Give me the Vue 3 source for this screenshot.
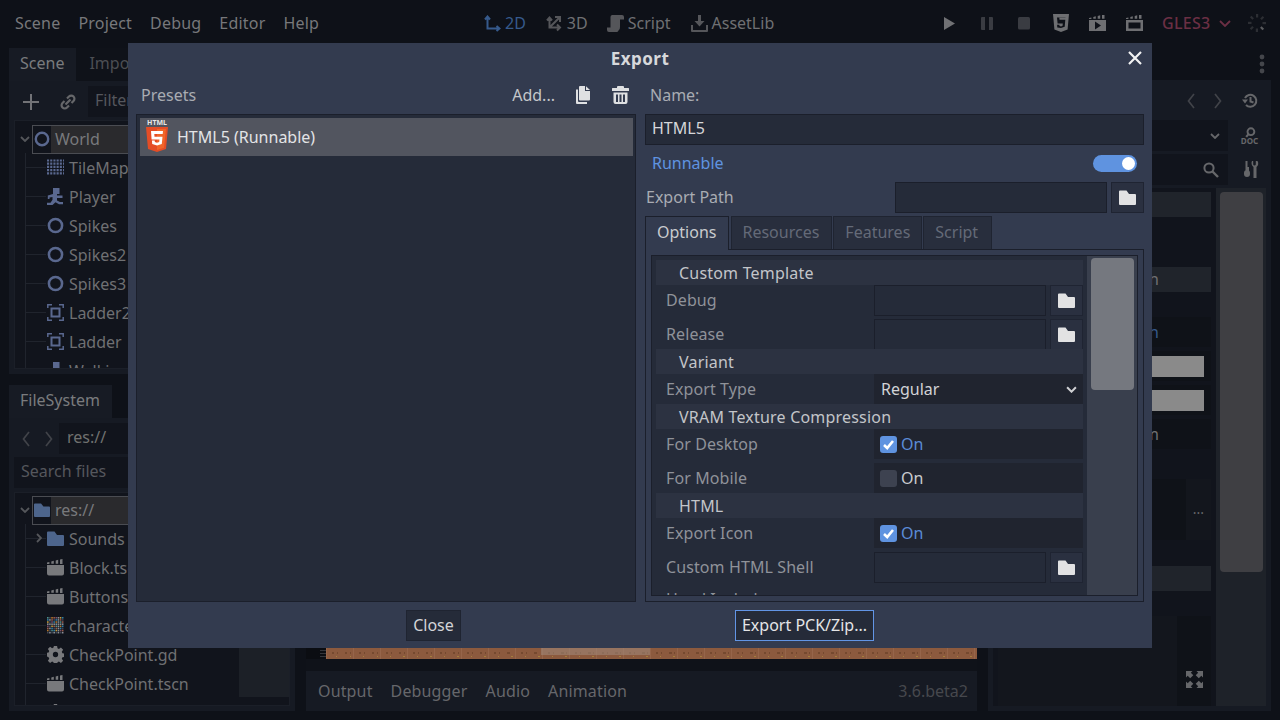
<script setup>
const menus = ['Scene', 'Project', 'Debug', 'Editor', 'Help']
const sceneRows = [
  { icon: 'i-grid', text: 'TileMap' },
  { icon: 'i-player', text: 'Player' },
  { icon: 'i-ring', text: 'Spikes' },
  { icon: 'i-ring', text: 'Spikes2' },
  { icon: 'i-ring', text: 'Spikes3' },
  { icon: 'i-collide', text: 'Ladder2' },
  { icon: 'i-collide', text: 'Ladder' },
  { icon: 'i-player', text: 'WalkingEnemy' }
]
const fileRows = [
  { icon: 'i-folder', text: 'Sounds', blue: true, arrow: true },
  { icon: 'i-clapper', text: 'Block.tscn' },
  { icon: 'i-clapper', text: 'Buttons.tscn' },
  { icon: 'thumb', text: 'character.png' },
  { icon: 'i-gear', text: 'CheckPoint.gd' },
  { icon: 'i-clapper', text: 'CheckPoint.tscn' },
  { icon: 'i-gear', text: 'Coin.gd' }
]
const palette = ['#4f8f8a', '#8a8f95', '#b5762a', '#2f7fa8', '#7a4f6a', '#3f4656', '#c49a3a', '#9a5a4a']
const thumb = []
for (let y = 0; y < 8; y++) {
  for (let x = 0; x < 8; x++) {
    thumb.push({ x: x * 2, y: y * 2, c: palette[(x * 5 + y * 3 + x * y) % 8] })
  }
}
const tabs = ['Resources', 'Features', 'Script']
const spinner = [0, 45, 90, 135, 180, 225, 270, 315]
</script>

<template>
  <div class="screen">
    <svg class="defs" width="0" height="0">
      <defs>
        <symbol id="i-folder" viewBox="0 0 17 15"><path fill="currentColor" d="M1 0.5h6.5l2.5 3.4h6a1 1 0 0 1 1 1v9a1 1 0 0 1-1 1H1a1 1 0 0 1-1-1V1.500a1 1 0 0 1 1-1z"/></symbol>
        <symbol id="i-dup" viewBox="0 0 16 18"><path fill="currentColor" d="M5 0h5v5h5v8.500a1 1 0 0 1-1 1H5a1 1 0 0 1-1-1V1a1 1 0 0 1 1-1zM11 0.300L15 4h-4zM1 3.500h2v11.500a1 1 0 0 0 1 1h8v2H2a1 1 0 0 1-1-1z"/></symbol>
        <symbol id="i-trash" viewBox="0 0 17 18"><path fill="currentColor" d="M6 0h5a1 1 0 0 1 1 1v1h4.500a.5.500 0 0 1 .5.500V5H0V2.500a.5.500 0 0 1 .5-.5H5V1a1 1 0 0 1 1-1zM1.500 6.500h14V16a2 2 0 0 1-2 2h-10a2 2 0 0 1-2-2zM4 8.500v7.500h2V8.500zM7.500 8.500v7.500h2V8.500zM11 8.500v7.500h2V8.500z" fill-rule="evenodd"/></symbol>
        <symbol id="i-ring" viewBox="0 0 16 16"><circle cx="8" cy="8" r="6.200" fill="none" stroke="currentColor" stroke-width="2.400"/></symbol>
        <symbol id="i-grid" viewBox="0 0 17 17"><path fill="none" stroke="currentColor" stroke-width="2.200" stroke-dasharray="2.100 1.100" d="M0 1.500h17M0 4.700h17M0 7.900h17M0 11.100h17M0 14.300h17"/></symbol>
        <symbol id="i-player" viewBox="0 0 17 17"><path fill="currentColor" d="M6 0h6.500v6H10v1.500h5.500V10H10v2.500l3 1.500h3v2.300h-4l-3.500-2-3 2.700H0v-2.300h3.500l2-3V9l-3 .5V11H.8V7.500L6 6z"/></symbol>
        <symbol id="i-collide" viewBox="0 0 17 17"><path fill="none" stroke="currentColor" stroke-width="1.500" d="M.8 4V.8H5M12 .8h4.200V4M16.200 13v3.200H12M5 16.200H.8V13"/><rect x="4.500" y="4.500" width="8" height="8" fill="none" stroke="currentColor" stroke-width="2"/></symbol>
        <symbol id="i-clapper" viewBox="0 0 17 16"><path fill="currentColor" d="M0 5.500h17V14a2 2 0 0 1-2 2H2a2 2 0 0 1-2-2zM0 3l2.400-.6v2H0zM4.300 1.900l2.500-.6v3H4.300zM8.700 .9l2.500-.6v4H8.700zM13 0l2.500-.5v4.900H13z"/></symbol>
        <symbol id="i-gear" viewBox="0 0 16 16"><path fill="currentColor" fill-rule="evenodd" d="M6.500 0h3l.4 2.200 1.300.6 1.900-1.300 2.100 2.100-1.300 1.900.6 1.300 2.200.4v3l-2.200.4-.6 1.300 1.300 1.900-2.100 2.100-1.900-1.300-1.300.6-.4 2.200h-3l-.4-2.200-1.300-.6-1.900 1.300-2.100-2.100 1.300-1.900-.6-1.300L-.7 9.500v-3l2.200-.4.6-1.300L.8 2.900l2.100-2.100 1.900 1.300 1.300-.6zM8 5.500a2.500 2.500 0 1 0 0 5 2.500 2.500 0 0 0 0-5z"/></symbol>
        <symbol id="i-2d" viewBox="0 0 17 17"><path fill="none" stroke="currentColor" stroke-width="2" d="M3.500 2v11.500H15M1 4.500L3.500 1.500 6 4.500M12.500 11l3 2.500-3 2.500"/></symbol>
        <symbol id="i-3d" viewBox="0 0 17 17"><path fill="none" stroke="currentColor" stroke-width="2" d="M3.500 3v9.500h10M3.500 12.500L13 3M1 5.500l2.500-3 2.500 3M11 15.500l3-3-3-3M9 2h5v5"/></symbol>
        <symbol id="i-script" viewBox="0 0 17 17"><path fill="currentColor" d="M5 0h10a2 2 0 0 1 2 2v2.500h-4V12a4 4 0 0 1-1.500 3.500A2 2 0 0 1 10 17H2a2 2 0 0 1-2-2v-2.500h3.500V2A2 2 0 0 1 5 0z"/></symbol>
        <symbol id="i-asset" viewBox="0 0 17 17"><path fill="currentColor" d="M7 0h3v6h3.500L8.500 11.500 3.500 6H7zM0 10h2v5h13v-5h2v6a1 1 0 0 1-1 1H1a1 1 0 0 1-1-1z"/></symbol>
        <symbol id="i-html" viewBox="0 0 16 18"><path fill="currentColor" fill-rule="evenodd" d="M0 0h16l-1.400 15.500L8 18l-6.600-2.500zM4 3.500l.6 6H9.800l-.2 2.300-1.600.6-1.600-.6-.1-1.100H4.100l.2 2.800L8 14l3.700-1.300.6-6.900H6.500l-.2-2H12.400l.2-.3z"/></symbol>
        <symbol id="i-film-play" viewBox="0 0 17 16"><path fill="currentColor" fill-rule="evenodd" d="M0 5h17v11H0zM6 6.500v8l6-4zM0 3l2.400-.6v1.500H0zM4.300 1.900l2.500-.6v2.500H4.300zM8.700 .9l2.500-.6v3.500H8.700zM13 0l2.500-.5v4.300H13z"/></symbol>
        <symbol id="i-film-box" viewBox="0 0 17 16"><path fill="currentColor" fill-rule="evenodd" d="M0 5h17v11H0zM2.500 7.500v6h12v-6zM0 3l2.400-.6v1.500H0zM4.300 1.900l2.500-.6v2.500H4.300zM8.700 .9l2.500-.6v3.500H8.700zM13 0l2.500-.5v4.300H13z"/></symbol>
        <symbol id="i-search" viewBox="0 0 16 16"><circle cx="6" cy="6" r="4.600" fill="none" stroke="currentColor" stroke-width="2"/><path stroke="currentColor" stroke-width="2.400" d="M9.500 9.500L15 15"/></symbol>
        <symbol id="i-tools" viewBox="0 0 16 17"><path fill="currentColor" d="M2.500 0h2v6h1.500v3.500c1 1 1 2 1 3.500a3 3 0 0 1-6 0c0-1.500 0-2.500 1-3.500H2.500V6h0zM9 0l1.200 0v3.500a1.400 1.400 0 0 0 2.600 0V0H14.500c1.200 2 1 4.500-1 6v11h-3V6C8.500 4.500 8 2 9 0z"/></symbol>
        <symbol id="i-history" viewBox="0 0 16 16"><path fill="none" stroke="currentColor" stroke-width="2" d="M3 5a6 6 0 1 1 1 7M8.500 4v4.500l3 1"/><path fill="currentColor" d="M0 6.500h6L3 10.500z"/></symbol>
      </defs>
    </svg>

    <header class="topbar">
      <nav class="menus">
        <span v-for="m in menus" :key="m">{{ m }}</span>
      </nav>
      <nav class="views">
        <span class="view active"><svg class="ic17"><use href="#i-2d" /></svg>2D</span>
        <span class="view"><svg class="ic17"><use href="#i-3d" /></svg>3D</span>
        <span class="view"><svg class="ic17"><use href="#i-script" /></svg>Script</span>
        <span class="view"><svg class="ic17"><use href="#i-asset" /></svg>AssetLib</span>
      </nav>
      <div class="runbar">
        <svg class="run-btn play" viewBox="0 0 12 13"><path fill="currentColor" d="M1 0l11 6.500L1 13z" /></svg>
        <svg class="run-btn dim" viewBox="0 0 12 13"><path fill="currentColor" d="M0 1a1 1 0 0 1 1-1h3v13H1a1 1 0 0 1-1-1zM8 0h3a1 1 0 0 1 1 1v11a1 1 0 0 1-1 1H8z" /></svg>
        <svg class="run-btn dim stop" viewBox="0 0 12 13"><rect width="12" height="12.500" rx="1.500" fill="currentColor" /></svg>
        <svg class="html-btn"><use href="#i-html" /></svg>
        <svg class="film-btn"><use href="#i-film-play" /></svg>
        <svg class="film-btn last"><use href="#i-film-box" /></svg>
        <span class="gles">GLES3</span>
        <svg class="gles-arrow" viewBox="0 0 12 7"><path d="M1 1l5 5 5-5" fill="none" stroke="currentColor" stroke-width="1.800" /></svg>
        <svg class="spinner" viewBox="0 0 18 18">
          <rect v-for="(a, i) in spinner" :key="a" x="8" y="0" width="2.200" height="3.500" :fill="i === 3 ? '#5a5b5e' : '#2c2e33'" :transform="`rotate(${a} 9 9)`" />
        </svg>
      </div>
    </header>

    <main class="workspace">
      <section class="left-col">
        <div class="dock scene-dock">
          <div class="tabbar">
            <span class="dtab on">Scene</span>
            <span class="dtab">Import</span>
          </div>
          <div class="dock-panel">
            <div class="tool-row">
              <svg class="plus" viewBox="0 0 16 16"><path d="M8 0v16M0 8h16" stroke="currentColor" stroke-width="2" /></svg>
              <svg class="link" viewBox="0 0 16 16"><path d="M7 4.500l2-2a3 3 0 0 1 4.500 4.500l-2 2M9 11.500l-2 2A3 3 0 0 1 2.500 9l2-2M5.500 10.500l5-5" fill="none" stroke="currentColor" stroke-width="2.200" /></svg>
              <span class="field filter">Filter nodes</span>
            </div>
            <div class="tree">
              <div class="tree-rows">
                <div class="root-row">
                  <svg class="chev" viewBox="0 0 10 6"><path d="M1 1l4 4 4-4" fill="none" stroke="currentColor" stroke-width="1.800" /></svg>
                  <div class="root-sel">
                    <span class="root-ic"><svg class="ic16 node"><use href="#i-ring" /></svg></span>
                    <span>World</span>
                  </div>
                </div>
                <div v-for="r in sceneRows" :key="r.text" class="row">
                  <span class="tick"></span>
                  <svg class="ic17 node"><use :href="'#' + r.icon" /></svg>
                  <span>{{ r.text }}</span>
                </div>
              </div>
            </div>
          </div>
        </div>

        <div class="dock file-dock">
          <div class="tabbar">
            <span class="dtab on">FileSystem</span>
          </div>
          <div class="dock-panel fs-panel">
            <div class="path-row">
              <svg class="nav" viewBox="0 0 8 16"><path d="M7 1L1.500 8 7 15" fill="none" stroke="currentColor" stroke-width="1.700" /></svg>
              <svg class="nav" viewBox="0 0 8 16"><path d="M1 1l5.500 7L1 15" fill="none" stroke="currentColor" stroke-width="1.700" /></svg>
              <span class="field path">res://</span>
            </div>
            <div class="search-row"><span class="field search">Search files</span></div>
            <div class="tree fs-tree">
              <div class="tree-rows">
                <div class="root-row">
                  <svg class="chev" viewBox="0 0 10 6"><path d="M1 1l4 4 4-4" fill="none" stroke="currentColor" stroke-width="1.800" /></svg>
                  <div class="root-sel">
                    <span class="root-ic"><svg class="ic16 folder-blue"><use href="#i-folder" /></svg></span>
                    <span>res://</span>
                  </div>
                </div>
                <div v-for="r in fileRows" :key="r.text" class="row">
                  <span class="tick"></span>
                  <svg v-if="r.arrow" class="row-arrow" viewBox="0 0 6 10"><path d="M1 1l4 4-4 4" fill="none" stroke="currentColor" stroke-width="1.800" /></svg>
                  <svg v-if="r.icon === 'thumb'" class="ic17" viewBox="0 0 16 16">
                    <rect v-for="(t, i) in thumb" :key="i" :x="t.x" :y="t.y" width="1.500" height="1.500" :fill="t.c" />
                  </svg>
                  <svg v-else class="ic17" :class="r.blue ? 'folder-blue' : 'file-ic'"><use :href="'#' + r.icon" /></svg>
                  <span>{{ r.text }}</span>
                </div>
              </div>
              <div class="fs-scroll"></div>
            </div>
          </div>
        </div>
      </section>

      <section class="center-col">
        <div class="viewport">
          <div class="strip">
            <div class="ruler"></div>
            <div class="ground"><div class="ghost"></div></div>
          </div>
        </div>
        <div class="bottom-bar">
          <span>Output</span>
          <span>Debugger</span>
          <span>Audio</span>
          <span>Animation</span>
          <span class="version">3.6.beta2</span>
        </div>
      </section>

      <section class="right-col">
        <div class="right-tabs">
          <svg class="dots" viewBox="0 0 6 20"><circle cx="3" cy="3" r="2.400" /><circle cx="3" cy="10" r="2.400" /><circle cx="3" cy="17" r="2.400" /></svg>
        </div>
        <div class="right-panel">
          <div class="nav-row">
            <svg class="rnav" viewBox="0 0 8 16"><path d="M7 1L1.500 8 7 15" fill="none" stroke="currentColor" stroke-width="1.700" /></svg>
            <svg class="rnav" viewBox="0 0 8 16"><path d="M1 1l5.500 7L1 15" fill="none" stroke="currentColor" stroke-width="1.700" /></svg>
            <svg class="ric"><use href="#i-history" /></svg>
          </div>
          <div class="res-row">
            <div class="res-field">
              <svg class="res-chev" viewBox="0 0 10 6"><path d="M1 1l4 4 4-4" fill="none" stroke="currentColor" stroke-width="1.800" /></svg>
            </div>
            <svg class="doc" viewBox="0 0 20 18">
              <circle cx="11.500" cy="4.500" r="3.600" fill="none" stroke="currentColor" stroke-width="2" />
              <path d="M9 7L6.500 10" stroke="currentColor" stroke-width="2.200" />
              <text x="10" y="17.800" text-anchor="middle" class="doc-text">DOC</text>
            </svg>
          </div>
          <div class="res-row second">
            <div class="res-field">
              <svg class="res-search"><use href="#i-search" /></svg>
            </div>
            <svg class="ric tool"><use href="#i-tools" /></svg>
          </div>
          <div class="insp">
            <div class="insp-rows">
              <div class="band"></div>
              <div class="irow h50"></div>
              <div class="band"><span class="end">Collision</span></div>
              <div class="irow h25"></div>
              <div class="vrow"><span class="end blue">On</span></div>
              <div class="vrow gap"><i class="bar"></i></div>
              <div class="vrow gap"><i class="bar"></i></div>
              <div class="vrow gap"><span class="end">Transform</span></div>
              <div class="irow h30"></div>
              <div class="block">
                <div class="block-btn">...</div>
              </div>
              <div class="irow h26"></div>
              <div class="band"></div>
              <div class="irow h25"></div>
              <div class="preview">
                <div class="preview-btn">
                  <svg class="expand" viewBox="0 0 17 17"><path fill="currentColor" d="M0 0h6.500L4.800 1.700 7.300 4.200 4.200 7.300 1.700 4.800 0 6.500zM17 0v6.500L15.300 4.800 12.800 7.300 9.700 4.200 12.200 1.700 10.500 0zM0 17v-6.500l1.700 1.700 2.500-2.500 3.100 3.100-2.500 2.500 1.700 1.700zM17 17h-6.500l1.700-1.700-2.500-2.500 3.100-3.100 2.500 2.500 1.700-1.700z" /></svg>
                </div>
              </div>
            </div>
            <div class="insp-scroll"><div class="insp-grab"></div></div>
          </div>
        </div>
      </section>
    </main>

    <div class="dialog">
      <div class="title">
        <strong>Export</strong>
        <svg class="close" viewBox="0 0 14 14"><path d="M1 1l12 12M13 1L1 13" stroke="currentColor" stroke-width="2.200" /></svg>
      </div>
      <div class="dlg-body">
        <div class="presets">
          <div class="presets-head">
            <span class="muted">Presets</span>
            <span class="add">Add...</span>
            <svg class="head-ic dup"><use href="#i-dup" /></svg>
            <svg class="head-ic trash"><use href="#i-trash" /></svg>
          </div>
          <div class="preset-list">
            <div class="preset-row">
              <svg class="logo" viewBox="0 0 24 34">
                <text x="12" y="6" text-anchor="middle" class="logo-text">HTML</text>
                <path fill="#e44d26" d="M1 8h22l-2 22-9 3-9-3z" />
                <path fill="#f16529" d="M12 10v21l7-2.300L21 10z" />
                <path fill="#fff" d="M6 12h12l-.3 3H9.300l.2 2.800h8l-.7 7.200-4.800 1.500-4.800-1.500-.3-3.500h2.800l.2 1.600 2.100.6 2.200-.6.3-2.600H6.600z" />
              </svg>
              <span>HTML5 (Runnable)</span>
            </div>
          </div>
        </div>
        <div class="config">
          <div class="name-head"><span class="muted">Name:</span></div>
          <div class="input name-input">HTML5</div>
          <div class="runnable">
            <span class="blue-text">Runnable</span>
            <span class="toggle"><i></i></span>
          </div>
          <div class="export-path">
            <span class="muted">Export Path</span>
            <div class="path-field">
              <div class="input grow"></div>
              <button class="folder-btn"><svg class="folder"><use href="#i-folder" /></svg></button>
            </div>
          </div>
          <div class="tabs">
            <span class="tab active">Options</span>
            <span v-for="t in tabs" :key="t" class="tab">{{ t }}</span>
          </div>
          <div class="tab-panel">
            <div class="options">
              <div class="opt-list">
                <div class="section">Custom Template</div>
                <div class="opt lift">
                  <label>Debug</label>
                  <div class="path-field val"><div class="input grow"></div><button class="folder-btn"><svg class="folder"><use href="#i-folder" /></svg></button></div>
                </div>
                <div class="opt sp clipped">
                  <label>Release</label>
                  <div class="path-field val"><div class="input grow"></div><button class="folder-btn"><svg class="folder"><use href="#i-folder" /></svg></button></div>
                </div>
                <div class="section">Variant</div>
                <div class="opt h30">
                  <label>Export Type</label>
                  <div class="select val"><span>Regular</span><svg class="sel-chev" viewBox="0 0 10 6"><path d="M1 1l4 4 4-4" fill="none" stroke="currentColor" stroke-width="1.800" /></svg></div>
                </div>
                <div class="section">VRAM Texture Compression</div>
                <div class="opt h30">
                  <label>For Desktop</label>
                  <div class="check val on"><span class="box"><svg viewBox="0 0 17 17"><path d="M4 9l3.200 3L13 5" fill="none" stroke="#fff" stroke-width="2.600" /></svg></span>On</div>
                </div>
                <div class="opt h30 sp4">
                  <label>For Mobile</label>
                  <div class="check val"><span class="box"></span>On</div>
                </div>
                <div class="section">HTML</div>
                <div class="opt h30">
                  <label>Export Icon</label>
                  <div class="check val on"><span class="box"><svg viewBox="0 0 17 17"><path d="M4 9l3.200 3L13 5" fill="none" stroke="#fff" stroke-width="2.600" /></svg></span>On</div>
                </div>
                <div class="opt sp4 lift">
                  <label>Custom HTML Shell</label>
                  <div class="path-field val"><div class="input grow"></div><button class="folder-btn"><svg class="folder"><use href="#i-folder" /></svg></button></div>
                </div>
                <div class="opt sp4 head-inc"><label>Head Include</label></div>
              </div>
              <div class="opt-scroll"><div class="opt-grab"></div></div>
            </div>
          </div>
        </div>
      </div>
      <div class="dlg-foot">
        <button class="btn close-btn">Close</button>
        <button class="btn export-btn">Export PCK/Zip...</button>
      </div>
    </div>
  </div>
</template>

<style scoped>
.screen {
  position: relative;
  width: 1280px;
  height: 720px;
  overflow: hidden;
  background: #0e1118;
  color: #77787b;
  font: 16px/22px "Noto Sans", sans-serif;
  white-space: nowrap;
}
.screen *, .screen *::before { box-sizing: border-box; }
.defs { position: absolute; }
svg { display: block; flex: none; }
.ic16 { width: 16px; height: 16px; }
.ic17 { width: 17px; height: 17px; }

/* top bar */
.topbar {
  display: flex;
  align-items: center;
  height: 46px;
  padding-left: 15px;
  color: #77787b;
}
.menus { display: flex; gap: 18px; width: 469px; letter-spacing: .2px; }
.views { display: flex; width: 459px; }
.view { display: flex; align-items: center; gap: 4px; margin-right: 20px; color: #6f7073; }
.view svg { color: #55565a; }
.view:nth-child(2) { margin-right: 19px; }
.view.active { color: #365a8c; }
.view.active svg { color: #365a8c; }
.runbar { display: flex; align-items: center; }
.run-btn { width: 12px; height: 13px; margin-right: 25px; }
.run-btn.stop { margin-right: 23px; }
.run-btn.play { color: #707174; margin-right: 26px; }
.run-btn.dim { color: #3a3c42; }
.html-btn { width: 16px; height: 18px; margin-right: 20px; color: #6e6f72; }
.film-btn { width: 17px; height: 16px; margin-right: 20px; color: #6e6f72; }
.film-btn.last { margin-right: 19px; }
.gles { color: #6b2f44; font-weight: 500; letter-spacing: .3px; }
.gles-arrow { width: 12px; height: 7px; margin-left: 8px; color: #6b2f44; }
.spinner { width: 18px; height: 18px; margin-left: 17px; }

/* workspace */
.workspace {
  display: flex;
  gap: 11px;
  height: 667px;
  padding: 2px 9px 0;
}
.left-col { width: 286px; display: flex; flex-direction: column; gap: 11px; flex: none; }
.dock { display: flex; flex-direction: column; }
.scene-dock { height: 326px; }
.file-dock { height: 326px; }
.tabbar { display: flex; height: 33px; flex: none; }
.dtab { padding: 4px 12px 0 11px; color: #4c4e53; background: #0f1219; }
.dtab + .dtab { padding-left: 13px; }
.dtab.on { background: #171b24; color: #7a7b7e; }
.dock-panel { flex: 1; min-height: 0; background: #161a23; padding: 5px; display: flex; flex-direction: column; }
.tool-row { display: flex; align-items: center; height: 31px; margin-bottom: 3px; flex: none; }
.plus { width: 16px; height: 16px; margin-left: 9px; color: #727377; }
.link { width: 16px; height: 16px; margin-left: 21px; color: #66676a; }
.field { background: #11141c; color: #55575d; display: block; height: 31px; line-height: 28px; }
.filter { margin-left: 12px; width: 190px; padding-left: 7px; }
.tree {
  flex: 1;
  min-height: 0;
  background: #11141c;
  border: 1px solid #1b1f28;
  padding-top: 4px;
  display: flex;
  overflow: hidden;
}
.tree-rows { flex: 1; min-width: 0; display: flex; flex-direction: column; position: relative; color: #6f7073; overflow: hidden; }
.tree-rows::before {
  content: "";
  position: absolute;
  left: 10px;
  top: 28px;
  bottom: 0;
  width: 1px;
  background: #20242d;
}
.root-row { display: flex; align-items: center; height: 28px; flex: none; }
.chev { width: 10px; height: 6px; margin-left: 5px; margin-right: 2px; color: #55575b; }
.root-sel {
  flex: 1;
  height: 29px;
  display: flex;
  align-items: center;
  border: 1px solid #4a4c52;
  background: #2a2a2d;
  color: #78797c;
}
.root-ic { width: 18px; height: 100%; background: #11141c; display: flex; align-items: center; justify-content: center; margin-right: 4px; }
.row { display: flex; align-items: center; height: 29px; flex: none; position: relative; padding-left: 32px; gap: 5px; }
.tick { position: absolute; left: 11px; top: 14px; width: 20px; height: 1px; background: #20242d; }
.node { color: #5a688f; }
.folder-blue { color: #4d658c; }
.file-ic { color: #78797c; }
.row-arrow { position: absolute; left: 21px; top: 9px; width: 6px; height: 10px; color: #55575b; }
.path-row { display: flex; align-items: center; height: 31px; flex: none; }
.nav { width: 8px; height: 16px; color: #414349; margin-left: 8px; margin-right: 7px; }
.nav + .nav { margin-left: 8px; margin-right: 6px; }
.path { flex: 1; padding-left: 8px; color: #70716f; }
.search-row { height: 31px; margin-top: 3px; flex: none; }
.search { margin-left: 0; padding-left: 7px; width: 160px; }
.fs-tree { margin-top: 4px; padding-top: 3px; }
.fs-scroll { width: 50px; margin-bottom: 8px; background: #1c2027; flex: none; }

/* center */
.center-col { width: 671px; display: flex; flex-direction: column; flex: none; }
.viewport { height: 623px; padding-top: 600px; flex: none; background: #0f1219; }
.strip { display: flex; height: 11px; background: #0b0d12; }
.ruler {
  width: 20px;
  background: repeating-linear-gradient(to bottom, transparent 0 2px, #34363b 2px 3px) 14px 0 / 6px 100% no-repeat;
}
.ground {
  flex: 1;
  position: relative;
  background:
    repeating-linear-gradient(to right, #75492f 0 2px, transparent 2px 5px, #75492f 5px 6px, transparent 6px 13.500px) 6px 4px / 100% 2px no-repeat,
    repeating-linear-gradient(to right, #a67f3c 0 1px, transparent 1px 13.500px) 10px 8px / 100% 1px no-repeat,
    repeating-linear-gradient(to right, #96654a 0 1px, transparent 1px 27px),
    #8c5a3e;
}
.ghost { position: absolute; left: 215px; top: 0; width: 109px; height: 7px; background: #a08b7c; opacity: .55; }
.bottom-bar {
  display: flex;
  align-items: center;
  gap: 18px;
  height: 40px;
  flex: none;
  padding: 0 9px 0 12px;
  background: #161a23;
  color: #66676b;
  letter-spacing: .15px;
}
.version { margin-left: auto; color: #46484d; letter-spacing: 0; }

/* right */
.right-col { width: 283px; display: flex; flex-direction: column; flex: none; }
.right-tabs { height: 32px; flex: none; display: flex; justify-content: flex-end; align-items: center; padding-right: 6px; }
.dots { width: 6px; height: 20px; fill: #44464b; }
.right-panel { height: 631px; flex: none; background: #161a23; display: flex; flex-direction: column; padding: 0 5px 5px 5px; }
.nav-row { display: flex; align-items: center; justify-content: flex-end; height: 40px; flex: none; padding-top: 2px; }
.rnav { width: 8px; height: 16px; color: #414349; margin-right: 19px; }
.ric { width: 16px; height: 16px; margin-right: 8px; color: #66676a; }
.rnav + .ric { margin-left: 1px; }
.res-row { display: flex; height: 31px; flex: none; align-items: center; }
.res-row.second { margin-top: 3px; }
.res-field { flex: 1; height: 31px; margin-right: 12px; background: #11141c; display: flex; align-items: center; justify-content: flex-end; padding-right: 8px; }
.res-chev { width: 10px; height: 6px; color: #66676a; }
.res-search { width: 16px; height: 16px; color: #66676a; margin-right: 1px; }
.doc { width: 19px; height: 18px; margin-right: 7px; color: #66676a; }
.doc-text { font: 700 8.500px "Noto Sans", sans-serif; fill: currentColor; }
.tool { height: 17px; margin-right: 7px; margin-left: 3px; }
.insp { flex: 1; min-height: 0; margin-top: 3px; background: #11141c; padding: 4px 0 0 5px; display: flex; gap: 5px; color: #6f7073; }
.insp-rows { flex: 1; min-width: 0; display: flex; flex-direction: column; }
.band { height: 25px; background: #20242b; text-align: right; flex: none; }
.end { display: block; line-height: 25px; padding-right: 52px; color: #6f7073; }
.end.blue { color: #365a8c; line-height: 30px; }
.irow { flex: none; }
.h50 { height: 50px; }
.h25 { height: 25px; }
.h26 { height: 26px; }
.h30 { height: 30px; }
.vrow { height: 30px; background: #0f1218; text-align: right; flex: none; }
.vrow .end { line-height: 30px; }
.vrow.gap { margin-top: 4px; }
.bar { display: block; height: 21px; margin: 5px 7px 0 auto; width: 60px; background: #8a8a8a; }
.block { height: 61px; background: #0f1218; display: flex; justify-content: flex-end; flex: none; }
.block-btn { width: 25px; background: #13161d; text-align: center; line-height: 60px; font-size: 14px; color: #66676a; }
.preview { flex: 1; min-height: 0; background: #13161d; display: flex; justify-content: flex-end; }
.preview-btn { width: 34px; background: #0f1218; display: flex; align-items: flex-end; justify-content: center; padding-bottom: 18px; }
.expand { width: 17px; height: 17px; color: #66676a; }
.insp-scroll { width: 50px; flex: none; background: #1e2229; padding: 0 3px 0 4px; margin-top: -4px; }
.insp-grab { height: 380px; margin-top: 4px; background: #3f3f43; border-radius: 4px; }

/* dialog */
.dialog {
  position: absolute;
  left: 128px;
  top: 43px;
  width: 1024px;
  height: 605px;
  background: #333b4f;
  display: flex;
  flex-direction: column;
  color: #c6c8cc;
}
.title { height: 32px; flex: none; display: flex; align-items: center; justify-content: center; position: relative; }
.title strong { font-weight: 700; font-size: 17px; letter-spacing: .5px; color: #d7d8db; }
.close { position: absolute; right: 10px; top: 8px; width: 14px; height: 14px; color: #f2f2f3; }
.dlg-body { flex: none; height: 520px; margin-top: 7px; padding: 0 8px; display: flex; gap: 9px; }
.presets { width: 500px; flex: none; display: flex; flex-direction: column; }
.presets-head { height: 32px; flex: none; display: flex; align-items: center; padding-left: 5px; padding-bottom: 6px; }
.muted { color: #a9acb3; }
.export-path .muted { margin-bottom: 2px; }
.add { margin-left: auto; color: #c5c7cb; }
.head-ic { color: #dfe0e2; }
.head-ic.dup { width: 16px; height: 18px; margin-left: 20px; }
.head-ic.trash { width: 17px; height: 18px; margin-left: 21px; margin-right: 7px; }
.preset-list { flex: 1; background: #252b39; border: 1px solid #1b1f2b; padding: 3px 2px 3px 3px; }
.preset-row { height: 38px; background: #52555f; display: flex; align-items: center; gap: 8px; padding-left: 5px; color: #e3e4e6; }
.logo { width: 24px; height: 34px; margin-top: -3px; }
.logo-text { font: 700 7px "Noto Sans", sans-serif; fill: #e8e8e8; }
.config { flex: 1; min-width: 0; display: flex; flex-direction: column; }
.name-head { height: 32px; flex: none; display: flex; align-items: center; padding-left: 5px; padding-bottom: 6px; }
.input { background: #252b39; border: 1px solid #1b1f2b; padding-left: 6px; color: #d6d7da; }
.name-input { height: 31px; line-height: 26px; flex: none; }
.runnable { height: 37px; flex: none; display: flex; align-items: center; justify-content: space-between; padding: 0 7px; }
.blue-text { color: #5f93e0; margin-bottom: 2px; }
.toggle { width: 44px; height: 17px; background: #5f93e0; border-radius: 9px; position: relative; }
.toggle i { position: absolute; right: 2px; top: 2px; width: 13px; height: 13px; border-radius: 50%; background: #fff; }
.export-path { display: flex; height: 31px; flex: none; align-items: center; justify-content: space-between; padding-left: 1px; }
.path-field { display: flex; gap: 4px; width: 249px; height: 31px; }
.grow { flex: 1; }
.folder-btn { width: 33px; height: 100%; padding: 0; flex: none; background: #2a3040; border: 1px solid #1f2432; display: flex; align-items: center; justify-content: center; }
.folder { width: 17px; height: 15px; color: #e2e2e3; }
.tabs { display: flex; gap: 1px; height: 33px; flex: none; margin-top: 3px; position: relative; z-index: 1; }
.tab { padding: 4px 11px 0 11px; background: #282e3d; border: 1px solid #1f2431; border-bottom: 0; color: #646a78; }
.tab:nth-child(2) { padding-left: 10px; padding-right: 12px; }
.tab:last-child { padding-right: 13px; }
.tab.active { background: #333b4f; border-color: #1b1f2b; color: #c9cbce; margin-right: 1px; padding-right: 12px; height: 34px; }
.tab-panel { flex: 1; min-height: 0; border: 1px solid #1b1f2b; padding: 5px; display: flex; }
.options { flex: 1; min-width: 0; background: #252b39; border: 1px solid #1b1f2b; display: flex; overflow: hidden; }
.opt-list { flex: 1; min-width: 0; padding: 4px 0 0 4px; overflow: hidden; }
.section { height: 25px; background: #2c3241; line-height: 27px; padding-left: 23px; color: #c3c5c9; letter-spacing: .2px; }
.opt { display: flex; align-items: center; height: 31px; overflow: hidden; }
.opt.sp { margin-top: 3px; }
.opt.sp4 { margin-top: 4px; }
.opt.clipped { height: 30px; align-items: flex-start; }
.opt.clipped label { line-height: 30px; }
.opt.h30 { height: 30px; }
.opt label { width: 218px; padding-left: 10px; color: #8f9299; flex: none; letter-spacing: .1px; }
.opt.lift label { margin-bottom: 2px; }
.opt.head-inc { align-items: flex-start; }
.opt.head-inc label { line-height: 24px; }
.val { flex: 1; width: auto; min-width: 0; }
.select { height: 30px; background: #20242f; display: flex; align-items: center; justify-content: space-between; padding: 0 6px 0 7px; color: #d2d3d6; }
.sel-chev { width: 11px; height: 7px; color: #cfd0d3; }
.check { height: 30px; background: #20242f; display: flex; align-items: center; gap: 4px; padding-left: 6px; color: #c9cbce; }
.box { width: 17px; height: 17px; border-radius: 3px; background: #3d4250; display: block; }
.check.on { color: #5b8bd6; }
.check.on .box { background: #5f93e0; }
.box svg { width: 17px; height: 17px; }
.opt-scroll { width: 50px; flex: none; background: #393f4d; padding: 2px 3px 0 4px; margin-left: 4px; }
.opt-grab { height: 132px; background: #75787f; border-radius: 4px; }
.dlg-foot { flex: 1; display: flex; align-items: flex-start; padding-top: 8px; }
.btn { font: inherit; height: 31px; padding: 0 0 2px; background: #252b39; border: 1px solid #1f2431; color: #d3d4d7; }
.close-btn { width: 55px; margin-left: 278px; }
.export-btn { width: 139px; margin-left: 274px; border-color: #6295e6; color: #e4e5e7; }
</style>

<style>
html, body { margin: 0; background: #0e1118; }
</style>
